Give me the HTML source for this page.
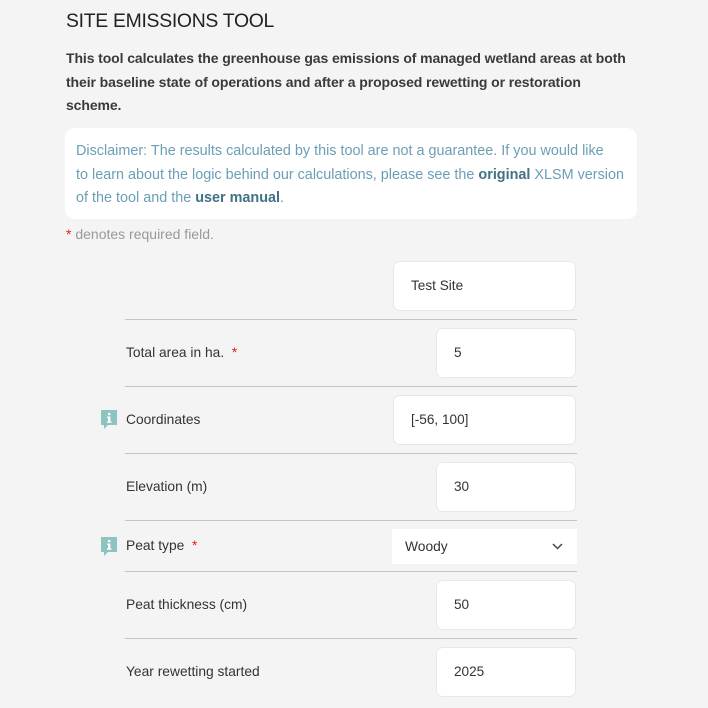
<!DOCTYPE html>
<html><head><meta charset="utf-8"><style>
*{margin:0;padding:0;box-sizing:border-box}
body{width:708px;height:708px;background:#f4f4f4;font-family:"Liberation Sans",sans-serif;color:#333;position:relative;overflow:hidden}
.a{position:absolute;white-space:nowrap}
h1{position:absolute;left:66px;top:10px;font-size:19.4px;font-weight:normal;color:#222;letter-spacing:-0.3px}
.intro{position:absolute;left:66px;top:47px;width:566px;font-size:14px;font-weight:bold;line-height:23.5px;color:#3a3a3a;letter-spacing:-0.1px}
.disc{position:absolute;left:65px;top:128px;width:572px;height:91px;background:#fff;border-radius:10px;padding:12px 11px;font-size:14.4px;line-height:23.5px;color:#6a9fb5;letter-spacing:0;white-space:nowrap}
.disc b{color:#3f7385}
.req{color:#e02020}
.line{position:absolute;left:125px;width:452px;height:1px;background:#c4c4c4}
.in{position:absolute;background:#fff;border:1px solid #e6e9ec;border-radius:7px;height:50px;font-size:13.6px;color:#333;padding-left:17px;line-height:48px}
.lab{position:absolute;left:126px;font-size:13.8px;color:#333;letter-spacing:0}
.ic{position:absolute;left:101px}
</style></head><body>
<h1>SITE EMISSIONS TOOL</h1>
<div class="intro">This tool calculates the greenhouse gas emissions of managed wetland areas at both their baseline state of operations and after a proposed rewetting or restoration scheme.</div>
<div class="disc">Disclaimer: The results calculated by this tool are not a guarantee. If you would like<br>to learn about the logic behind our calculations, please see the <b>original</b> XLSM version<br>of the tool and the <b>user manual</b>.</div>
<div class="a" style="left:66px;top:226px;font-size:14px;color:#999"><span class="req">*</span> denotes required field.</div>

<div class="in" style="left:393px;top:261px;width:183px">Test Site</div>
<div class="line" style="top:319px"></div>
<div class="lab" style="top:345px">Total area in ha. &nbsp;<span class="req">*</span></div>
<div class="in" style="left:436px;top:328px;width:140px">5</div>
<div class="line" style="top:386px"></div>
<svg class="ic" style="top:410px" width="17" height="20" viewBox="0 0 17 20"><path d="M0 0H16V15H7L3 19V15H0Z" fill="#8ec4c0"/><rect x="7" y="3" width="2.4" height="2.2" fill="#fff"/><rect x="7" y="6.5" width="2.4" height="6" fill="#fff"/><rect x="6" y="6.5" width="3" height="1.3" fill="#fff"/><rect x="6" y="11.5" width="4.5" height="1.3" fill="#fff"/></svg>
<div class="lab" style="top:412px">Coordinates</div>
<div class="in" style="left:393px;top:395px;width:183px">[-56, 100]</div>
<div class="line" style="top:453px"></div>
<div class="lab" style="top:479px">Elevation (m)</div>
<div class="in" style="left:436px;top:462px;width:140px">30</div>
<div class="line" style="top:520px"></div>
<svg class="ic" style="top:537px" width="17" height="20" viewBox="0 0 17 20"><path d="M0 0H16V15H7L3 19V15H0Z" fill="#8ec4c0"/><rect x="7" y="3" width="2.4" height="2.2" fill="#fff"/><rect x="7" y="6.5" width="2.4" height="6" fill="#fff"/><rect x="6" y="6.5" width="3" height="1.3" fill="#fff"/><rect x="6" y="11.5" width="4.5" height="1.3" fill="#fff"/></svg>
<div class="lab" style="top:538px">Peat type &nbsp;<span class="req">*</span></div>
<div class="a" style="left:392px;top:529px;width:185px;height:35px;background:#fff;font-size:13.8px;line-height:35px;padding-left:13px">Woody
<svg style="position:absolute;right:14px;top:14px" width="11" height="7" viewBox="0 0 11 7"><path d="M1 1L5.5 5.5L10 1" stroke="#444" stroke-width="1.5" fill="none"/></svg></div>
<div class="line" style="top:571px"></div>
<div class="lab" style="top:597px">Peat thickness (cm)</div>
<div class="in" style="left:436px;top:580px;width:140px">50</div>
<div class="line" style="top:638px"></div>
<div class="lab" style="top:664px">Year rewetting started</div>
<div class="in" style="left:436px;top:647px;width:140px">2025</div>
</body></html>
